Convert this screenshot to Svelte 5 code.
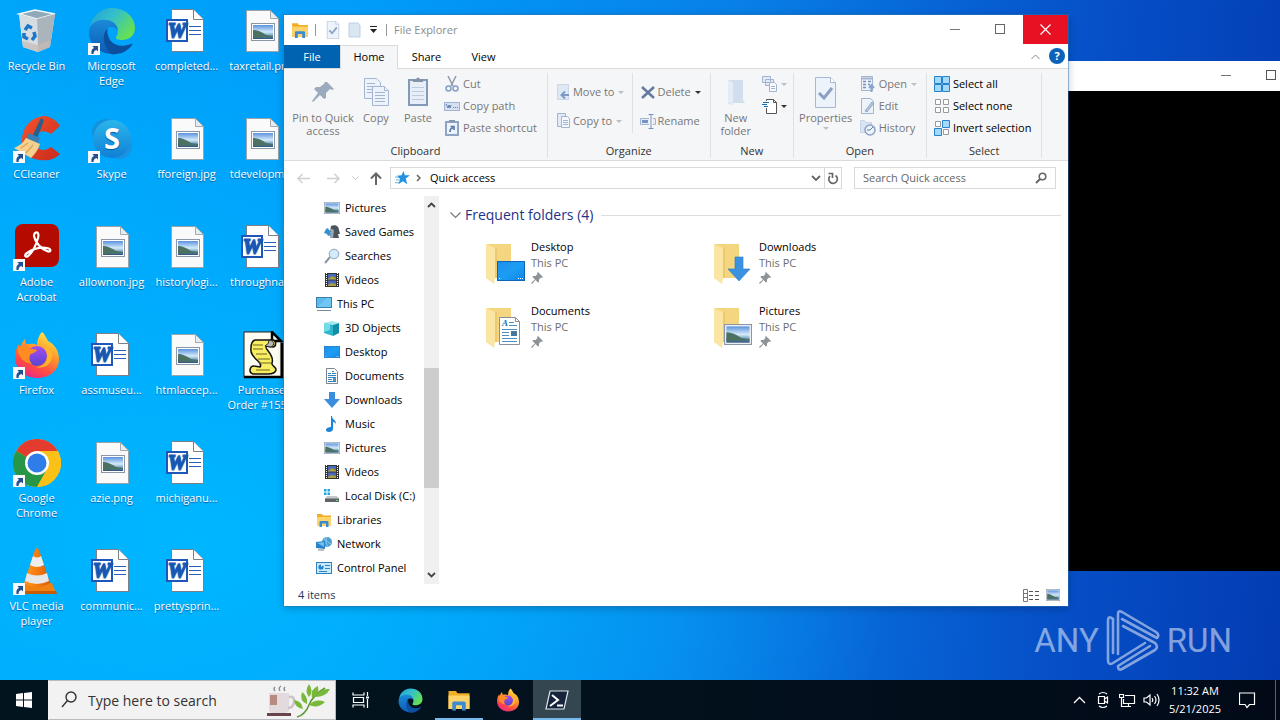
<script>
  const shortcuts = [
    { icon: 'bin', label: 'Recycle Bin' },
    { icon: 'ccleaner', label: 'CCleaner', link: true },
    { icon: 'acrobat', label: 'Adobe Acrobat', link: true },
    { icon: 'firefox', label: 'Firefox', link: true },
    { icon: 'chrome', label: 'Google Chrome', link: true },
    { icon: 'vlc', label: 'VLC media player', link: true },
    { icon: 'edge', label: 'Microsoft Edge', link: true },
    { icon: 'skype', label: 'Skype', link: true },
    { icon: 'image', label: 'allownon.jpg' },
    { icon: 'word', label: 'assmuseu...' },
    { icon: 'image', label: 'azie.png' },
    { icon: 'word', label: 'communic...' },
    { icon: 'word', label: 'completed...' },
    { icon: 'image', label: 'fforeign.jpg' },
    { icon: 'image', label: 'historylogi...' },
    { icon: 'image', label: 'htmlaccep...' },
    { icon: 'word', label: 'michiganu...' },
    { icon: 'word', label: 'prettysprin...' },
    { icon: 'image', label: 'taxretail.png' },
    { icon: 'image', label: 'tdevelopm...' },
    { icon: 'word', label: 'throughna...' },
    { icon: 'script', label: 'Purchase Order #155...' }
  ];

  const tree = [
    { icon: 'pictures', label: 'Pictures', sub: true },
    { icon: 'games', label: 'Saved Games', sub: true },
    { icon: 'searches', label: 'Searches', sub: true },
    { icon: 'videos', label: 'Videos', sub: true },
    { icon: 'pc', label: 'This PC' },
    { icon: 'cube', label: '3D Objects', sub: true },
    { icon: 'desktop', label: 'Desktop', sub: true },
    { icon: 'documents', label: 'Documents', sub: true },
    { icon: 'downloads', label: 'Downloads', sub: true },
    { icon: 'music', label: 'Music', sub: true },
    { icon: 'pictures', label: 'Pictures', sub: true },
    { icon: 'videos', label: 'Videos', sub: true },
    { icon: 'disk', label: 'Local Disk (C:)', sub: true },
    { icon: 'libraries', label: 'Libraries' },
    { icon: 'network', label: 'Network' },
    { icon: 'control', label: 'Control Panel' }
  ];

  const folders = ['Desktop', 'Downloads', 'Documents', 'Pictures'];
  const tabs = ['Share', 'View'];
</script>

<svg class="defs" aria-hidden="true">
  <defs>
    <linearGradient id="sky" x1="0" y1="0" x2="0" y2="1">
      <stop offset="0" stop-color="#5b93de" /><stop offset=".5" stop-color="#d5eafa" /><stop offset=".75" stop-color="#6fa0c0" /><stop offset="1" stop-color="#284f78" />
    </linearGradient>
    <linearGradient id="edgeTop" x1="0" y1="0" x2="1" y2=".6">
      <stop offset="0" stop-color="#1f9fd8" /><stop offset=".5" stop-color="#35c1c8" /><stop offset="1" stop-color="#65e052" />
    </linearGradient>
    <linearGradient id="edgeLow" x1="0" y1="0" x2="0" y2="1">
      <stop offset="0" stop-color="#1b8ad8" /><stop offset="1" stop-color="#0c5cb4" />
    </linearGradient>
    <linearGradient id="fire" x1=".8" y1="0" x2=".3" y2="1">
      <stop offset="0" stop-color="#fff04a" /><stop offset=".4" stop-color="#ff9a2a" /><stop offset=".75" stop-color="#ff4a45" /><stop offset="1" stop-color="#e6278a" />
    </linearGradient>
    <linearGradient id="globe" x1="0" y1="0" x2="0" y2="1">
      <stop offset="0" stop-color="#a64cf0" /><stop offset="1" stop-color="#5a45d0" />
    </linearGradient>
    <linearGradient id="skypeFill" x1="0" y1="0" x2="0" y2="1">
      <stop offset="0" stop-color="#2bb5ec" /><stop offset="1" stop-color="#1080d5" />
    </linearGradient>
    <linearGradient id="cone" x1="0" y1="0" x2="1" y2="0">
      <stop offset="0" stop-color="#ff9a1c" /><stop offset=".5" stop-color="#f57c10" /><stop offset="1" stop-color="#d65c05" />
    </linearGradient>
    <linearGradient id="screen" x1="0" y1="0" x2="1" y2="1">
      <stop offset="0" stop-color="#1f8fea" /><stop offset=".5" stop-color="#1c9df5" /><stop offset="1" stop-color="#1285e6" />
    </linearGradient>
    <linearGradient id="red" x1="0" y1="0" x2="1" y2="1">
      <stop offset="0" stop-color="#f4542c" /><stop offset="1" stop-color="#c92a1c" />
    </linearGradient>
  </defs>
</svg>

{#snippet landscape(x, y, w, h)}
  <svg {x} {y} width={w} height={h} viewBox="0 0 24 18" preserveAspectRatio="none">
    <rect x=".5" y=".5" width="23" height="17" fill="#fff" stroke="#8b97a6" />
    <rect x="2" y="2" width="20" height="14" fill="url(#sky)" />
    <path d="M2 7c4 0 9 2 13 5l7 1v1l-20 1z" fill="#4c7062" />
  </svg>
{/snippet}

{#snippet edge()}
  <path d="M2 22C3 9 13 1 24 1c13 0 23 9 23 20 0 8-6 12-13 12-4 0-7-1-6-3 5-6-1-15-10-15C9 15 4 18 2 22z" fill="url(#edgeTop)" />
  <path d="M1 25c0-8 8-13 17-12 7 0 12 5 12 11-1-3-4-4-7-4-6 0-7 7-4 12 3 6 12 9 22 6-5 6-11 10-18 9C10 46 1 37 1 25z" fill="url(#edgeLow)" />
  <path d="M20 21c-7 6-5 18 3 26 8 1 16-2 21-9 1-1 0-2-1-1-10 4-19 1-22-6-2-4-2-8-1-10z" fill="#0b4f9e" />
{/snippet}

{#snippet firefox()}
  <path d="M29 1c3 2 4 6 6 9 6 3 11 9 11 18 0 12-10 19-22 19S2 38 2 26c0-6 2-10 4-13l1 4c1-4 3-7 5-9l1 5c4 0 8-1 11 1 0-5 2-10 5-13z" fill="url(#fire)" />
  <circle cx="24" cy="25" r="10" fill="url(#globe)" />
  <path d="M5 16c5-3 9 0 12 2 3 0 6 0 7 1-1 3-5 3-7 5-1 3-1 6 2 9-9-1-15-8-14-17z" fill="#ff8b22" />
  <path d="M28 15c5 2 7 7 6 12-1 6-6 9-11 9 7 2 15-2 16-10 1-6-4-11-11-11z" fill="#ffb52e" />
{/snippet}

{#snippet page()}
  <path d="M8.500 3.500h24l8 8v33h-32z" fill="#fafafa" stroke="#9aa4ad" />
  <path d="M32.500 3.500v8h8z" fill="#e4edf2" stroke="#a5a9ad" />
{/snippet}

{#snippet bigIcon(name)}
  <svg class="big" viewBox="0 0 48 48" aria-hidden="true">
    {#if name === 'bin'}
      <path d="M6 7l16-4 20 4-5 33-12 5-15-5z" fill="#d5dce1" />
      <path d="M6 7l16-4 20 4-18 5z" fill="#8fa9b8" stroke="#f3f7f9" stroke-width="1.500" />
      <path d="M24 12l18-5-5 33-12 5z" fill="#aab4bb" />
      <path d="M6 7l18 5 1 33-15-5z" fill="#d6dde2" />
      <path d="M10 34l14 4 13-5-1 7-11 5-15-5z" fill="#c6b9b4" opacity=".7" />
      <g fill="none" stroke="#1976c9" stroke-width="3.500"><path d="M12 23l3-4 4 2" /><path d="M21 25l1 4-3 4" /><path d="M15 32l-4-2 0-4" /></g>
    {:else if name === 'edge'}
      {@render edge()}
    {:else if name === 'firefox'}
      {@render firefox()}
    {:else if name === 'chrome'}
      <circle cx="24" cy="24" r="24" fill="#fbbc1a" />
      <path d="M24 24L3.200 12A24 24 0 0 1 44.800 12z" fill="#e33b2e" />
      <path d="M3.200 12L24 24l10 6-10 18A24 24 0 0 1 3.200 12z" fill="#279647" />
      <path d="M24 12h20.800A24 24 0 0 1 24 48l10.400-18z" fill="#fbc116" />
      <circle cx="24" cy="24" r="12" fill="#fff" /><circle cx="24" cy="24" r="9.500" fill="#2f7de8" />
    {:else if name === 'ccleaner'}
      <path d="M47 11l-9 8c-9-6-16-1-16 7s8 12 16 6l9 7c-6 6-13 7-20 6C15 44 8 36 9 24 10 10 21 1 32 1c6 1 11 4 15 10z" fill="url(#red)" />
      <path d="M28 3l3 2-7 19-5-2z" fill="#27608f" /><path d="M16 18l11 5-2 6-12-5z" fill="#3b7fb5" />
      <path d="M13 23l14 6c-2 6-5 10-9 14L1 33c5-2 9-5 12-10z" fill="#f5d08e" />
      <path d="M8 33l7-5M13 38l7-8" stroke="#d9a95c" stroke-width="1.500" />
    {:else if name === 'acrobat'}
      <rect x="2" y="1" width="44" height="43" rx="8" fill="#b30b00" />
      <path d="M22 10c3-2 4 1 3 5-2 7-6 15-10 18-3 2-4-1-1-3 6-4 14-6 20-5 5 1 4 5 0 3-6-2-12-9-13-15 0-1 0-2 1-3z" fill="none" stroke="#fff" stroke-width="2.200" />
    {:else if name === 'skype'}
      <circle cx="18" cy="18" r="14" fill="#168fdc" /><circle cx="31" cy="31" r="13" fill="#1a93e2" /><circle cx="24" cy="24" r="19" fill="url(#skypeFill)" />
      <text x="24" y="34" text-anchor="middle" class="s">S</text>
    {:else if name === 'vlc'}
      <path d="M9 36h30l4 10H5z" fill="#ef8212" /><path d="M5 44h38l1 3H4z" fill="#c65c08" />
      <path d="M22 3q2-4 4 0l11 33q-13 8-26 0z" fill="url(#cone)" />
      <path d="M20 9q4 3 8 0l3 9q-7 4-14 0z" fill="#eee" /><path d="M14 26q10 5 20 0l2 8q-12 6-24 0z" fill="#e7e7e7" />
    {:else if name === 'image'}
      {@render page()}
      {@render landscape(13, 16, 24, 18)}
    {:else if name === 'word'}
      <path d="M8.500 2.500h22l10 10v32h-32z" fill="#fff" stroke="#7a7f88" />
      <path d="M30.500 2.500v10h10" fill="#fff" stroke="#7a7f88" />
      <path d="M26 19.500h12M26 23.500h12M26 27.500h12" stroke="#2a5fb8" stroke-width="1.200" />
      <rect x="4" y="13" width="20" height="21" fill="#fff" stroke="#1f57b8" stroke-width="2" />
      <text x="14" y="30" text-anchor="middle" class="w">W</text>
    {:else if name === 'script'}
      <path d="M6 1h28l9 9v36H6z" fill="#fdfdf2" stroke="#222" /><path d="M34 1v9h9zM6 46h38V12" fill="none" stroke="#000" stroke-width="2.500" />
      <path d="M17 9h18c4 1 3 7 0 7l-7-1c-2 3 9 9 6 17-1 3 4 3 4 7-1 4-5 4-8 4H15c-5-1-3-9 1-8l6 1c4-5-11-9-9-19 0-5 1-7 4-8z" fill="#f8ee62" stroke="#111" stroke-width="1.500" />
      <path d="M15 14h10M15 18h10M18 23h11M20 28h12M21 32h12M18 39h14" stroke="#6b6420" /><path d="M31 9c7 1 5 7 1 7l-5-1c2-1 4-3 4-6z" fill="#b8b8b8" stroke="#222" />
    {/if}
  </svg>
{/snippet}

{#snippet explorer()}
  <path d="M1 2h5l1 1.500h8V14H1z" fill="#f0ad25" /><path d="M1 5h14v9H1z" fill="#fdd36a" />
  <path d="M3.500 15v-5q0-1 1-1h7q1 0 1 1v5h-2.500v-3.500h-4V15z" fill="#3a8bd0" />
{/snippet}

{#snippet monitor(x, y, w, h)}
  <svg {x} {y} width={w} height={h} viewBox="0 0 28 20" preserveAspectRatio="none">
    <rect x=".5" y=".5" width="27" height="19" fill="url(#screen)" stroke="#0d66b8" /><path d="M2 17.500h2M21 17.500h5" stroke="#fff" stroke-dasharray="1 1" />
  </svg>
{/snippet}

{#snippet icon(name, size = 16)}
  <svg width={size} height={size} viewBox="0 0 16 16" aria-hidden="true">
    {#if name === 'pictures'}
      {@render landscape(0, 2, 16, 12)}
    {:else if name === 'games'}
      <path d="M7 2c4-2 8 0 8 4l1 4h-2l1 4H8l1-4-3-2z" fill="#4c555e" /><path d="M6 4l4 2-1 8H6z" fill="#9aa7b3" /><path d="M2 5l2-1 1 2 2 1-1 2 1 2-3 1-1-2-3-1 1-2z" fill="#3590cf" />
    {:else if name === 'searches'}
      <path d="M1 15l5-6" stroke="#8a97a3" stroke-width="2" /><circle cx="10" cy="6" r="4.800" fill="#d3ecfb" stroke="#8ea6b6" />
    {:else if name === 'videos'}
      <rect x="1" y="1" width="14" height="14" fill="#333" /><path d="M2.500 1v14M13.500 1v14" stroke="#fff" stroke-dasharray="1 1" /><rect x="4" y="2" width="8" height="5.500" fill="#4c68bd" /><rect x="4" y="8.500" width="8" height="5.500" fill="#4c68bd" /><path d="M4 7l4-3 4 2v1.500H4zM4 13l3-2 5 1v2H4z" fill="#a9a13a" />
    {:else if name === 'pc'}
      <rect x=".5" y="1.500" width="15" height="10" fill="#5bb9ee" stroke="#3c7fae" /><path d="M1 11L11 2h4v9z" fill="#7fd0f7" opacity=".6" /><path d="M1 14.500h14" stroke="#7a8c98" />
    {:else if name === 'cube'}
      <path d="M0 3l8-2 7 2-6 2z" fill="#9deaf2" /><path d="M0 3l9 2v11l-9-3z" fill="#2fb6cb" /><path d="M9 5l6-2v10l-6 3z" fill="#128da9" /><path d="M0 3l6 1v6l-6 2z" fill="#72dbe7" />
    {:else if name === 'desktop'}
      {@render monitor(0, 2, 16, 12)}
    {:else if name === 'documents'}
      <path d="M2.500.500h8l3 3v12h-11z" fill="#fff" stroke="#7d8791" /><path d="M4 5.500h3M8 3.500h2M8 5.500h4M4 7.500h8M4 9.500h8M4 11.500h4M4 13.500h8" stroke="#3484c0" /><path d="M9 10h3v3H9z" fill="#5a8fb5" />
    {:else if name === 'downloads'}
      <path d="M5 0h6v7h5l-8 9-8-9h5z" fill="#3b8ede" />
    {:else if name === 'music'}
      <path d="M8 0c0 4 5 4 4 9 0-2-1-3-3-3v7c0 2-2 3-4 3s-3-1-3-2c0-2 3-3 5-3V0z" fill="#1785dc" />
    {:else if name === 'disk'}
      <path d="M0 1h2.500v2.500H0zM3.500 1H6v2.500H3.500zM0 4.500h2.500V7H0zM3.500 4.500H6V7H3.500z" fill="#18a9e0" /><path d="M3 8h10l2 3H1z" fill="#c4c8cb" /><path d="M1 10.500h14V14H1z" fill="#5d6367" /><path d="M12 12.500h2" stroke="#67e35e" />
    {:else if name === 'libraries'}
      {@render explorer()}
    {:else if name === 'network'}
      <circle cx="11" cy="6" r="5" fill="#4a9fd6" /><path d="M8 3c3 1 4 4 7 5M11 1c-2 3-1 7 1 10" stroke="#93cbee" fill="none" /><path d="M0 6l9-1v8l-9-1z" fill="#2582c4" /><path d="M1 7l7-1v5z" fill="#6dc0f0" /><path d="M2 14h6" stroke="#76818b" />
    {:else if name === 'control'}
      <rect x=".5" y="2.500" width="15" height="11" fill="#c6e9fb" stroke="#2f80bd" /><circle cx="5" cy="7" r="2.600" fill="#2582cc" /><path d="M5 7V4.400h2.600z" fill="#fff" /><path d="M9 5.500h5M9 8.500h5M3 11.500h8" stroke="#2c86c7" />
    {:else if name === 'star'}
      <path d="M9 0l1.500 4.500 5.500 0-4.500 3.500 1.500 6-4.500-3-5 3 2-5.500L2 5l5-.500z" fill="#2492e0" /><path d="M0 6.500h4M1 9.500h4M0 12.500h4" stroke="#5bb0ea" />
    {:else if name === 'explorer'}
      {@render explorer()}
    {/if}
  </svg>
{/snippet}

{#snippet ribbonIcon(name)}
  <svg class="ri" viewBox="0 0 16 16" fill="none" stroke="#a2b4cf" aria-hidden="true">
    {#if name === 'cut'}
      <path d="M4 0l5 10M12 0L7 10" stroke="#8e9bad" stroke-width="1.500" /><circle cx="4.500" cy="12.500" r="2.500" stroke="#879fc4" stroke-width="1.500" /><circle cx="11.500" cy="12.500" r="2.500" stroke="#879fc4" stroke-width="1.500" />
    {:else if name === 'path'}
      <rect x=".5" y="4.500" width="15" height="8" fill="#d5e0f1" /><path d="M2 6l2 4 1-3 1 3 1-3M9 9.500h1M11 9.500h1M13 9.500h1" stroke="#6580ac" />
    {:else if name === 'shortcut'}
      <rect x="2" y="2" width="12" height="13" fill="#edf3fb" stroke="#8fa3c4" stroke-width="2" /><path d="M5 1h6" stroke="#8494ad" stroke-width="2" /><path d="M6 12c0-3 1-4 3-4M6.500 6.500H10V10" stroke="#5b7bad" stroke-width="1.700" />
    {:else if name === 'move'}
      <path d="M1.500.500h11v15h-11z" fill="#dfe9f6" stroke="#cbd8ea" /><path d="M13 11H6M9 7.500L5.500 11 9 14.500" stroke="#7d9ac4" stroke-width="2" />
    {:else if name === 'copyto'}
      <path d="M1.500.500h8v13h-8z" fill="#e1eaf6" /><path d="M5.500 3.500h6l2 2v9h-8z" fill="#f4f8fd" /><path d="M7 7.500h5M7 9.500h5M7 11.500h5" />
    {:else if name === 'delete'}
      <path d="M2 3l12 11M14 3L2 14" stroke="#64799c" stroke-width="2.500" />
    {:else if name === 'rename'}
      <path d="M9 5.500H.5v6H9M13 5.500h2.500v6H13" fill="#e6edf7" /><path d="M2 8.500h6" stroke="#7692bf" stroke-width="3" /><path d="M11 2v13M8.500 1.500h5M8.500 15.500h5" stroke="#7692bf" />
    {:else if name === 'newitem'}
      <path d="M.5.500h8v6h-8zM3.500 3.500h8v6h-8z" fill="#e2ebf6" /><path d="M7.500 6.500h5l2 2v7h-7z" fill="#f8fbff" /><path d="M9 10.500h4M9 12.500h4" />
    {:else if name === 'easy'}
      <path d="M4.500 3V1.500h7l3 3v11h-10V10" stroke="#555" fill="#fff" /><path d="M11.500 1.500v3h3" stroke="#555" /><path d="M1 4.500h6M0 6.500h5M2 8.500h4" stroke="#176cae" />
    {:else if name === 'open'}
      <path d="M1.500.500h11v14h-11z" fill="#edf3fa" /><path d="M1 2.500h11" stroke-width="2" /><path d="M3 5.500h3M3 8.500h3M3 11.500h3M8 5.500h3M8 8.500h2" stroke="#7890b7" stroke-width="1.500" /><path d="M11.500 16V9M9 12l2.500-3 2.500 3" stroke="#8ea5ca" stroke-width="2" />
    {:else if name === 'edit'}
      <path d="M1.500.500h9l3 3v12h-12z" fill="#edf3fa" /><path d="M5 13l7-9 2 1-7 9z" fill="#b8c8de" stroke="#93a6c5" />
    {:else if name === 'history'}
      <path d="M.5.500h4l1 2h6v10H.5z" fill="#d9e4f1" stroke="#c8d5e8" /><circle cx="10" cy="10" r="5" fill="#eef3fa" stroke="#8ba2c6" stroke-width="1.500" /><path d="M10 10l3-3M7 10h3" stroke="#5a78aa" />
    {:else if name === 'all'}
      <path d="M.5.500h7v7h-7zM8.500.500h7v7h-7zM.5 8.500h7v7h-7zM8.500 8.500h7v7h-7z" fill="#a3d9fb" stroke="#2583c9" />
    {:else if name === 'none'}
      <path d="M1.500 1.500h5v5h-5zM9.500 1.500h5v5h-5zM1.500 9.500h5v5h-5zM9.500 9.500h5v5h-5z" fill="#fff" stroke="#999" />
    {:else if name === 'invert'}
      <path d="M1.500 1.500h5v5h-5zM9.500 9.500h5v5h-5z" fill="#fff" stroke="#999" /><path d="M8.500.500h7v7h-7zM.5 8.500h7v7h-7z" fill="#a3d9fb" stroke="#2583c9" />
    {/if}
  </svg>
{/snippet}

{#snippet small(name, label, live = false, arrow = '')}
  <button class="small" class:live aria-label={label || name}>
    {@render ribbonIcon(name)}
    {#if label}<span>{label}</span>{/if}
    {#if arrow}<i class="arrow {arrow}"></i>{/if}
  </button>
{/snippet}

{#snippet pin()}
  <svg width="12" height="12" viewBox="0 0 12 12" aria-hidden="true"><path d="M7 0l5 5-1 1-1-.500L8 7.500V10l-1 .500L4.500 8 1 12l-1-1 4-3.500L1.500 5 2 4h2.500l2-2L6 1z" fill="#8d9499" /></svg>
{/snippet}

{#snippet checkDoc()}
  <path d="M1.500.500h15l5 5v25h-20z" fill="#edf3fb" stroke="#a8b7cf" /><path d="M16.500.500v5h5" fill="#fff" stroke="#a8b7cf" /><path d="M5 16l5 5 8-10" fill="none" stroke="#8ba0c4" stroke-width="3" />
{/snippet}

<div class="shell">
  <main class="desktop">
    <ul class="shortcuts">
      {#each shortcuts as s}
        <li>
          <a href="#{s.icon}" class="shortcut">
            <span class="pic">
              {@render bigIcon(s.icon)}
              {#if s.link}
                <svg class="badge" viewBox="0 0 12 12" aria-hidden="true"><rect width="12" height="12" fill="#f7f9fb" /><path d="M3.500 11C3 7.500 4 5.500 6 5L4.500 3H10v5.500L8.500 7C6.500 7.500 5.500 8.500 5.500 11z" fill="#23518f" /></svg>
              {/if}
            </span>
            <span class="name" class:wrap={!s.label.endsWith('...') || s.icon === 'script'}>{s.label}</span>
          </a>
        </li>
      {/each}
    </ul>

    <div class="watermark">
      <span>ANY</span>
      <svg width="54" height="62" viewBox="0 0 54 62" fill="none" stroke="#fff" stroke-width="2.600" stroke-linecap="round" stroke-linejoin="round" aria-hidden="true">
        <path d="M7 9Q2 5 2 11V50q0 6 5 3L39 33" /><path d="M7 9v34" />
        <path d="M12 44V4q0-4 4-2l34 20q4 3 1 6L16 9" />
        <path d="M17 16l32 17q4 4 0 7L16 59q-4 2-4-3L44 36" />
      </svg>
      <span>RUN</span>
    </div>

    <section class="window console" aria-label="Console">
      <div class="captions">
        <button aria-label="Minimize"><svg width="10" height="11"><path d="M0 5.500h10" stroke="#777" /></svg></button>
        <button aria-label="Maximize"><svg width="10" height="11"><rect x=".5" y=".5" width="9" height="9" fill="none" stroke="#555" /></svg></button>
        <button aria-label="Close"><svg width="11" height="11"><path d="M0 0l10 10M10 0L0 10" stroke="#555" /></svg></button>
      </div>
      <div class="screen"></div>
    </section>

    <section class="window explorer" aria-label="File Explorer">
      <header class="titlebar">
        {@render icon('explorer', 18)}
        <i class="bar"></i>
        <button class="quick" aria-label="Properties"><svg width="14" height="18" viewBox="0 0 23 31">{@render checkDoc()}</svg></button>
        <button class="quick" aria-label="New folder"><svg width="14" height="16"><path d="M1 1h9l2 2v12H1z" fill="#dbe6f3" stroke="#c0cfe3" /></svg></button>
        <button class="quick" aria-label="Customize"><svg width="8" height="8"><path d="M0 .500h7" stroke="#222" /><path d="M0 3h7L3.500 7z" fill="#222" /></svg></button>
        <i class="bar second"></i>
        <h1>File Explorer</h1>
        <div class="captions">
          <button aria-label="Minimize"><svg width="10" height="11"><path d="M0 5.500h10" stroke="#777" /></svg></button>
          <button aria-label="Maximize"><svg width="10" height="11"><rect x=".5" y=".5" width="9" height="9" fill="none" stroke="#666" /></svg></button>
          <button class="close" aria-label="Close"><svg width="11" height="11"><path d="M.5.500l10 10M10.500.500l-10 10" stroke="#fff" stroke-width="1.200" /></svg></button>
        </div>
      </header>

      <nav class="tabs">
        <button class="file">File</button>
        <button class="active">Home</button>
        {#each tabs as tab}<button>{tab}</button>{/each}
        <span class="grow"></span>
        <button class="fold" aria-label="Collapse the ribbon"><svg width="9" height="6"><path d="M.5 5L4.500 1l4 4" fill="none" stroke="#888" /></svg></button>
        <button class="help" aria-label="Help">?</button>
      </nav>

      <div class="ribbon">
        <div class="group">
          <div class="tools clip">
            <button class="large wide">
              <svg viewBox="0 0 32 32"><path d="M20 6l7 7-2 1-2-1-4 4v5l-2 1-4-4-7 7-1-1 6-8-4-4 2-2h4l5-4-1-1z" fill="#9baabd" /></svg>
              <span>Pin to Quick access</span>
            </button>
            <button class="large">
              <svg viewBox="0 0 32 32" fill="#edf3fb" stroke="#a5b5cf"><path d="M4.500 2.500h12l4 4v16h-16z" /><path d="M7 7.500h8M7 10.500h8M7 13.500h6M7 16.500h6" /><path d="M12.500 10.500h12l4 4v15h-16z" /><path d="M24.500 10.500v4h4M15 16.500h10M15 19.500h10M15 22.500h10M15 25.500h10" /></svg>
              <span>Copy</span>
            </button>
            <button class="large">
              <svg viewBox="0 0 32 32"><rect x="7" y="4" width="18" height="25" fill="#e7eef8" stroke="#8498b8" stroke-width="2" /><path d="M11 6V3h3q2-3 4 0h3v3z" fill="#8492a5" /><path d="M10 11.500h12M10 15.500h12M10 19.500h12M10 23.500h12" stroke="#bccae0" /></svg>
              <span>Paste</span>
            </button>
            <div class="stack">
              {@render small('cut', 'Cut')}
              {@render small('path', 'Copy path')}
              {@render small('shortcut', 'Paste shortcut')}
            </div>
          </div>
          <h2>Clipboard</h2>
        </div>
        <div class="group">
          <div class="tools organize">
            <div class="stack">
              {@render small('move', 'Move to', false, 'pale')}
              {@render small('copyto', 'Copy to', false, 'pale')}
            </div>
            <div class="stack ruled">
              {@render small('delete', 'Delete', false, 'dark')}
              {@render small('rename', 'Rename')}
            </div>
          </div>
          <h2>Organize</h2>
        </div>
        <div class="group">
          <div class="tools new">
            <button class="large">
              <svg viewBox="0 0 32 32"><path d="M8 4h15v20l2 3H12l-1 2-3-2z" fill="#d0deed" /><path d="M8 4l5 3v22l-5-3z" fill="#e3edf7" /></svg>
              <span>New folder</span>
            </button>
            <div class="stack">
              {@render small('newitem', '', false, 'pale')}
              {@render small('easy', '', true, 'dark')}
            </div>
          </div>
          <h2>New</h2>
        </div>
        <div class="group">
          <div class="tools open">
            <button class="large">
              <svg viewBox="-4 -1 32 32">{@render checkDoc()}</svg>
              <span>Properties</span>
              <i class="arrow pale"></i>
            </button>
            <div class="stack">
              {@render small('open', 'Open', false, 'pale')}
              {@render small('edit', 'Edit')}
              {@render small('history', 'History')}
            </div>
          </div>
          <h2>Open</h2>
        </div>
        <div class="group">
          <div class="tools select">
            <div class="stack">
              {@render small('all', 'Select all', true)}
              {@render small('none', 'Select none', true)}
              {@render small('invert', 'Invert selection', true)}
            </div>
          </div>
          <h2>Select</h2>
        </div>
      </div>

      <div class="nav">
        <button class="go" aria-label="Back"><svg width="13" height="11"><path d="M13 5.500H1M5.500 1L1 5.500 5.500 10" fill="none" stroke="#d0d0d0" stroke-width="1.500" /></svg></button>
        <button class="go" aria-label="Forward"><svg width="13" height="11"><path d="M0 5.500h12M7.500 1L12 5.500 7.500 10" fill="none" stroke="#d0d0d0" stroke-width="1.500" /></svg></button>
        <button class="recent" aria-label="Recent locations"><svg width="7" height="5"><path d="M.5.500l3 3 3-3" fill="none" stroke="#c8c8c8" /></svg></button>
        <button class="up" aria-label="Up"><svg width="12" height="13"><path d="M6 13V2M1 6.500l5-5 5 5" fill="none" stroke="#666" stroke-width="2" /></svg></button>
        <div class="address">
          {@render icon('star', 15)}
          <svg width="5" height="8"><path d="M1 1l3 3-3 3" fill="none" stroke="#666" stroke-width="1.500" /></svg>
          <span class="grow">Quick access</span>
          <button aria-label="Previous locations"><svg width="10" height="7"><path d="M1 1l4 4 4-4" fill="none" stroke="#666" stroke-width="1.800" /></svg></button>
          <button class="refresh" aria-label="Refresh"><svg width="12" height="13"><path d="M8.500 3.500A4.300 4.300 0 1 1 3 4M1.500 1.500h4v4.500" fill="none" stroke="#666" stroke-width="1.700" /></svg></button>
        </div>
        <label class="find">
          <input type="text" placeholder="Search Quick access" aria-label="Search Quick access" />
          <svg width="12" height="12"><circle cx="7.500" cy="4.500" r="3.300" fill="none" stroke="#666" stroke-width="1.600" /><path d="M5 7l-4 4" stroke="#666" stroke-width="2" /></svg>
        </label>
      </div>

      <div class="body">
        <ul class="tree">
          {#each tree as t}
            <li class:sub={t.sub}><a href="#{t.icon}">{@render icon(t.icon)}<span>{t.label}</span></a></li>
          {/each}
        </ul>
        <div class="scroll">
          <svg width="9" height="6"><path d="M1 5l3.500-3.500L8 5" fill="none" stroke="#444" stroke-width="1.800" /></svg>
          <div class="track"><div class="thumb"></div></div>
          <svg width="9" height="6"><path d="M1 1l3.500 3.500L8 1" fill="none" stroke="#444" stroke-width="1.800" /></svg>
        </div>
        <div class="content">
          <h2><svg width="11" height="7"><path d="M.5.500l5 5 5-5" fill="none" stroke="#777" stroke-width="1.200" /></svg>Frequent folders (4)<i></i></h2>
          <ul class="tiles">
            {#each folders as f}
              <li>
                <a href="#{f}">
                  <svg class="folder" width="42" height="44" viewBox="0 0 42 44" aria-hidden="true">
                    <path d="M1 2h25v34H1z" fill="#f3d67f" /><path d="M1 2l9 4v30l-1 6-8-6z" fill="#fbe5a3" /><path d="M10 6h2v30h-2z" fill="#e8c064" opacity=".6" />
                    {#if f === 'Desktop'}
                      {@render monitor(12, 19, 28, 20)}
                    {:else if f === 'Downloads'}
                      <path d="M22 15h8v12h7L26 39 15 27h7z" fill="#3b92e0" stroke="#2a78c4" stroke-width=".6" />
                    {:else if f === 'Documents'}
                      <path d="M14.500 11.500h16l4 4v23h-20z" fill="#fff" stroke="#86909a" /><path d="M30.500 11.500v4h4" fill="none" stroke="#86909a" /><text x="17" y="20" class="a">A</text><path d="M24 16.500h5M24 19.500h8M17 23.500h15M17 26.500h7M17 29.500h7M17 32.500h15M17 35.500h15" stroke="#4a8ec2" /><path d="M26 25h6v5h-6z" fill="#49779b" />
                    {:else}
                      {@render landscape(11, 18, 28, 21)}
                    {/if}
                  </svg>
                  <span class="info"><span>{f}</span><span class="where">This PC</span><span class="pin">{@render pin()}</span></span>
                </a>
              </li>
            {/each}
          </ul>
        </div>
      </div>

      <footer class="status">
        <span class="grow">4 items</span>
        <button aria-label="Details"><svg width="16" height="13"><path d="M.5.500h4v12h-4zM.5 4.500h4M.5 8.500h4" fill="none" stroke="#777" /><path d="M6 2.500h4M12 2.500h4M6 6.500h4M12 6.500h4M6 10.500h4M12 10.500h4" stroke="#555" /></svg></button>
        <button aria-label="Large icons"><svg width="14" height="12">{@render landscape(0, 0, 14, 12)}</svg></button>
      </footer>
    </section>
  </main>

  <footer class="taskbar">
    <button class="start" aria-label="Start"><svg width="16" height="16" fill="#fff"><path d="M0 2l7-1v6.500H0zM8 1l8-1v7.500H8zM0 8.500h7V15l-7-1zM8 8.500h8V16l-8-1z" /></svg></button>
    <label class="search">
      <svg width="16" height="18"><circle cx="10" cy="6" r="5" fill="none" stroke="#333" stroke-width="1.400" /><path d="M6.500 9.500L1 16" stroke="#333" stroke-width="1.400" /></svg>
      <input type="text" placeholder="Type here to search" aria-label="Type here to search" />
      <svg width="66" height="36" viewBox="0 0 66 36" aria-hidden="true">
        <path d="M9 9q-2-2 0-4M14 9q-2-3 1-5M19 9q-2-2 0-4" fill="none" stroke="#8a8a90" stroke-width="1.300" />
        <path d="M3 11h20v18q-2 2-4 2H7q-3 0-4-3z" fill="#e3dadd" /><path d="M4 13h7v10H4z" fill="#b78b80" /><path d="M23 15q6-1 5 5t-6 6" fill="none" stroke="#cfc2c8" stroke-width="2.500" /><path d="M1 31h24v3H1z" fill="#69434c" />
        <path d="M31 35q8-2 12-12T59 6" fill="none" stroke="#5c9b2e" stroke-width="1.600" />
        <path d="M43 2q-5 7 0 13 5-6 0-13zM36 10q-3 9 5 12 1-8-5-12zM28 18q1 8 9 9-1-8-9-9zM46 16q-2-9 6-12 2 8-6 12zM49 15q5-9 15-8-4 8-15 8zM43 23q7-7 16-3-7 7-16 3z" fill="#78b83a" />
      </svg>
    </label>
    <button class="app" aria-label="Task View"><svg width="18" height="18" fill="none" stroke="#fff"><path d="M1 1.500V4h11V1.500M1 16.500V14h11v2.500M1.500 6.500h10v5h-10zM15.500 1v4M15.500 8v9" stroke-width="1.200" /><path d="M14 6.500h3" stroke-width="2" /></svg></button>
    <button class="app" aria-label="Microsoft Edge"><svg width="25" height="25" viewBox="0 0 48 48">{@render edge()}</svg></button>
    <button class="app running" aria-label="File Explorer">{@render icon('explorer', 24)}</button>
    <button class="app" aria-label="Firefox"><svg width="24" height="24" viewBox="0 0 48 48">{@render firefox()}</svg></button>
    <button class="app running current" aria-label="PowerShell"><svg width="24" height="20"><path d="M5 1h18l-4 18H1z" fill="#15243c" stroke="#dfe5ec" stroke-width="1.200" /><path d="M7 5l6 5-8 6M12 15.500h6" fill="none" stroke="#fff" stroke-width="2" /></svg></button>
    <span class="grow"></span>
    <button class="tray" aria-label="Show hidden icons"><svg width="13" height="8"><path d="M1 7l5.500-5.500L12 7" fill="none" stroke="#fff" stroke-width="1.300" /></svg></button>
    <button class="tray" aria-label="Meet Now"><svg width="12" height="18" fill="none" stroke="#fff"><path d="M1.500 5.500h6v7h-6zM7.500 8l3-2v6l-3-2M2 3q4-3 8 0M2 15q4 3 8 0" stroke-width="1.200" /></svg></button>
    <button class="tray" aria-label="Network"><svg width="17" height="15" fill="none" stroke="#fff"><path d="M6 2.500h9.500v8H4.500V6M.500 1.500h4v3h-4zM2.500 5v8.500H12M9.500 11v3" stroke-width="1.200" /></svg></button>
    <button class="tray" aria-label="Volume"><svg width="17" height="14" fill="none" stroke="#fff"><path d="M1 5v4h2.500L7 12V2L3.500 5zM9 5q1.500 2 0 4M11.500 3q3 4 0 8M14 1q4 6 0 12" stroke-width="1.200" /></svg></button>
    <div class="clock"><span>11:32 AM</span><span>5/21/2025</span></div>
    <button class="notes" aria-label="Notifications"><svg width="17" height="17"><path d="M.5 1h15v11.500h-5L8 15.500l-2-3H.5z" fill="none" stroke="#fff" stroke-width="1.200" /></svg></button>
    <button class="peek" aria-label="Show desktop"></button>
  </footer>
</div>

<style>
  :global(body) { margin: 0; }
  .shell {
    display: flex; flex-direction: column; height: 100vh; overflow: hidden;
    font: 11px/14px "Open Sans", "Noto Sans", sans-serif; color: #000;
  }
  .defs { position: absolute; width: 0; height: 0; }
  svg { display: block; flex: none; }
  button { font: inherit; color: inherit; background: none; border: 0; padding: 0; margin: 0; }
  input { font: inherit; background: none; border: 0; padding: 0; outline: 0; flex: 1; min-width: 0; }
  a { color: inherit; text-decoration: none; }
  ul { list-style: none; margin: 0; padding: 0; }
  h1, h2 { font: inherit; margin: 0; }
  .grow { flex: 1; }

  .desktop {
    flex: 1; min-height: 0; position: relative; overflow: hidden;
    background:
      radial-gradient(ellipse 55% 75% at 15% 80%, #00b6ff 0%, #00b4ff00 100%),
      linear-gradient(95deg, #00a6fa 0%, #009cfa 28%, #0880e8 55%, #0650c8 82%, #033cb2 100%);
  }
  .shortcuts { display: grid; grid-auto-flow: column; grid-template-rows: repeat(6, 108px); grid-auto-columns: 75px; justify-content: start; margin-left: -1px; }
  .shortcut { display: flex; flex-direction: column; align-items: center; padding-top: 7px; gap: 3px; color: #fff; line-height: 15px; text-shadow: 0 1px 1px #0058a0; }
  .pic { position: relative; }
  .big { width: 48px; height: 48px; }
  .badge { position: absolute; left: 0; bottom: 0; width: 12px; height: 12px; }
  .name { text-align: center; white-space: nowrap; }
  .wrap { white-space: normal; max-width: 72px; }
  .w { font: italic bold 21px "Liberation Serif", serif; fill: #1f57b8; stroke: #1f57b8; }
  .s { font: bold 29px "Open Sans", sans-serif; fill: #fff; }
  .a { font: italic bold 9px "Liberation Serif", serif; fill: #1c70b5; }

  .watermark { position: absolute; right: 48px; bottom: 8px; display: flex; align-items: center; gap: 7px; color: #fff; opacity: .5; font: 33px/60px "Roboto", sans-serif; }

  .window { position: absolute; display: flex; flex-direction: column; background: #fff; }
  .console { inset: 61px -58px 109px 300px; }
  .screen { flex: 1; background: #000; }
  .explorer { inset: 15px 212px 74px 284px; box-shadow: 0 0 0 1px #2d78b880, 0 2px 8px #00000040; }
  .captions { display: flex; justify-content: flex-end; margin-left: auto; }
  .captions button { display: grid; place-items: center; width: 45px; height: 29px; }
  .captions .close { background: #e81123; margin-left: 1px; }
  .console .captions { height: 30px; margin: 0; }

  .titlebar { display: flex; height: 30px; padding-left: 7px; }
  .titlebar > :global(svg), .titlebar .quick, .titlebar h1 { align-self: center; }
  .bar { width: 1px; height: 12px; margin: 9px 10px 0 6px; background: #999; }
  .bar.second { margin: 9px 7px 0 8px; }
  .quick { margin-right: 8px; }
  .quick + .bar { margin-left: 0; }
  h1 { color: #8c8c8c; }

  .tabs { display: flex; align-items: stretch; height: 23px; border-bottom: 1px solid #dadbdc; }
  .tabs button { width: 57px; }
  .tabs .file { width: 56px; background: #0063b1; color: #fff; }
  .tabs .active { width: 58px; background: #f5f6f7; border: 1px solid #dadbdc; border-bottom: 0; margin-bottom: -1px; padding-bottom: 2px; }
  .tabs .fold { display: grid; place-items: center; width: 22px; }
  .tabs .help { width: 16px; height: 16px; margin: 3px 3px 0 3px; border-radius: 50%; background: #0b62b8; color: #fff; font-weight: 700; line-height: 16px; }

  .ribbon { display: flex; height: 91px; background: #f5f6f7; border-bottom: 1px solid #dadbdc; }
  .group { display: flex; flex-direction: column; margin: 4px 0 2px; border-right: 1px solid #e0e1e3; }
  .group h2 { text-align: center; color: #333; }
  .tools { display: flex; flex: 1; }
  .clip { padding: 0 10px 0 7px; }
  .organize { padding: 0 9px 0 8px; }
  .new { padding: 0 6px 0 4px; }
  .open { padding: 0 9px 0 5px; }
  .select { padding: 0 10px 0 7px; }
  .large { display: flex; flex-direction: column; align-items: center; width: 42px; padding-top: 3px; gap: 3px; line-height: 13px; color: #777; justify-content: flex-start; }
  .large svg { width: 32px; height: 32px; }
  .large.wide { width: 64px; }
  .open .large { width: 54px; }
  .stack { display: flex; flex-direction: column; }
  .clip .stack { margin-left: 5px; }
  .organize .stack { padding-top: 8px; gap: 7px; }
  .organize .small { gap: 1px; }
  .organize .arrow { margin-left: 3px; }
  .organize .ruled { margin-left: 8px; padding-left: 7px; border-left: 1px solid #e0e1e3; height: 52px; }
  .open .stack { margin-left: 7px; }
  .new .stack { margin-left: 5px; }
  .small { display: flex; align-items: center; gap: 3px; height: 22px; color: #777; white-space: nowrap; }
  .small.live { color: #000; }
  .ri { width: 16px; height: 16px; }
  .arrow { border: 3px solid transparent; border-top-color: #b9bfc6; border-bottom: 0; margin-left: 1px; }
  .arrow.dark { border-top-color: #333; }
  .new .arrow { margin-left: 0; }

  .nav { display: flex; align-items: center; height: 34px; padding: 0 12px 1px 13px; }
  .nav button { display: grid; place-items: center; }
  .go { width: 13px; margin-right: 17px; }
  .go + .go { margin-right: 12px; }
  .recent { margin-right: 11px; }
  .up { margin-right: 8px; }
  .address { display: flex; align-items: center; gap: 6px; flex: 1; height: 20px; padding-left: 4px; border: 1px solid #d9d9d9; }
  .address .grow { padding-left: 3px; }
  .address .refresh { width: 17px; height: 20px; border-left: 1px solid #d9d9d9; margin-left: -3px; }
  .find { display: flex; align-items: center; width: 184px; height: 20px; margin-left: 12px; padding: 0 8px; border: 1px solid #d9d9d9; }
  input::placeholder { color: #666; opacity: 1; }

  .body { display: flex; flex: 1; min-height: 0; }
  .tree { width: 140px; overflow: hidden; }
  .tree a { display: flex; align-items: center; gap: 5px; height: 24px; padding-left: 32px; white-space: nowrap; }
  .tree .sub a { padding-left: 40px; }
  .scroll { display: flex; flex-direction: column; align-items: center; justify-content: space-between; width: 15px; padding: 6px 0; background: #f0f0f0; }
  .track { flex: 1; width: 15px; margin: 10px 0 3px; display: flex; flex-direction: column; padding-top: 150px; }
  .thumb { height: 120px; background: #cdcdcd; }
  .content { flex: 1; min-width: 0; padding: 7px 7px 0 11px; }
  .content h2 { display: flex; align-items: center; gap: 4px; font-size: 14px; line-height: 24px; color: #1e3287; }
  .content h2 i { flex: 1; height: 1px; margin-left: 4px; background: #dedede; }
  .tiles { display: grid; grid-template-columns: repeat(auto-fill, 228px); grid-auto-rows: 64px; justify-content: start; padding: 12px 70px 0 35px; }
  .tiles a { display: flex; gap: 4px; }
  .folder { margin-top: 3px; }
  .info { display: flex; flex-direction: column; line-height: 16px; }
  .where { color: #6d6d6d; }
  .pin { padding-top: 1px; }
  .status { display: flex; align-items: center; gap: 7px; height: 22px; padding: 0 8px 0 14px; color: #1e395b; }

  .taskbar { display: flex; align-items: stretch; height: 40px; background: linear-gradient(90deg, #02151f, #03111d 50%, #020a18); color: #fff; }
  .taskbar button { display: grid; place-items: center; }
  .start { width: 48px; }
  .search { display: flex; align-items: center; gap: 11px; width: 271px; padding: 0 3px 0 12px; background: #f2f2f2; border: 1px solid #b8bcc0; border-left-color: #f2f2f2; font-size: 14px; line-height: 20px; margin-right: 1px; }
  .search input { padding-top: 1px; }
  .search input::placeholder { color: #333; }
  .app { width: 48px; margin-right: 1px; border-bottom: 2px solid transparent; border-top: 2px solid transparent; }
  .running { border-bottom-color: #76b9ed; }
  .current { background: #34464f; border-top-color: #34464f; }
  .tray { width: 24px; }
  .clock { display: flex; flex-direction: column; justify-content: center; align-items: center; width: 64px; line-height: 18px; }
  .notes { width: 40px; }
  .peek { width: 5px; margin-left: 8px; border-left: 1px solid #59616d; }
</style>
